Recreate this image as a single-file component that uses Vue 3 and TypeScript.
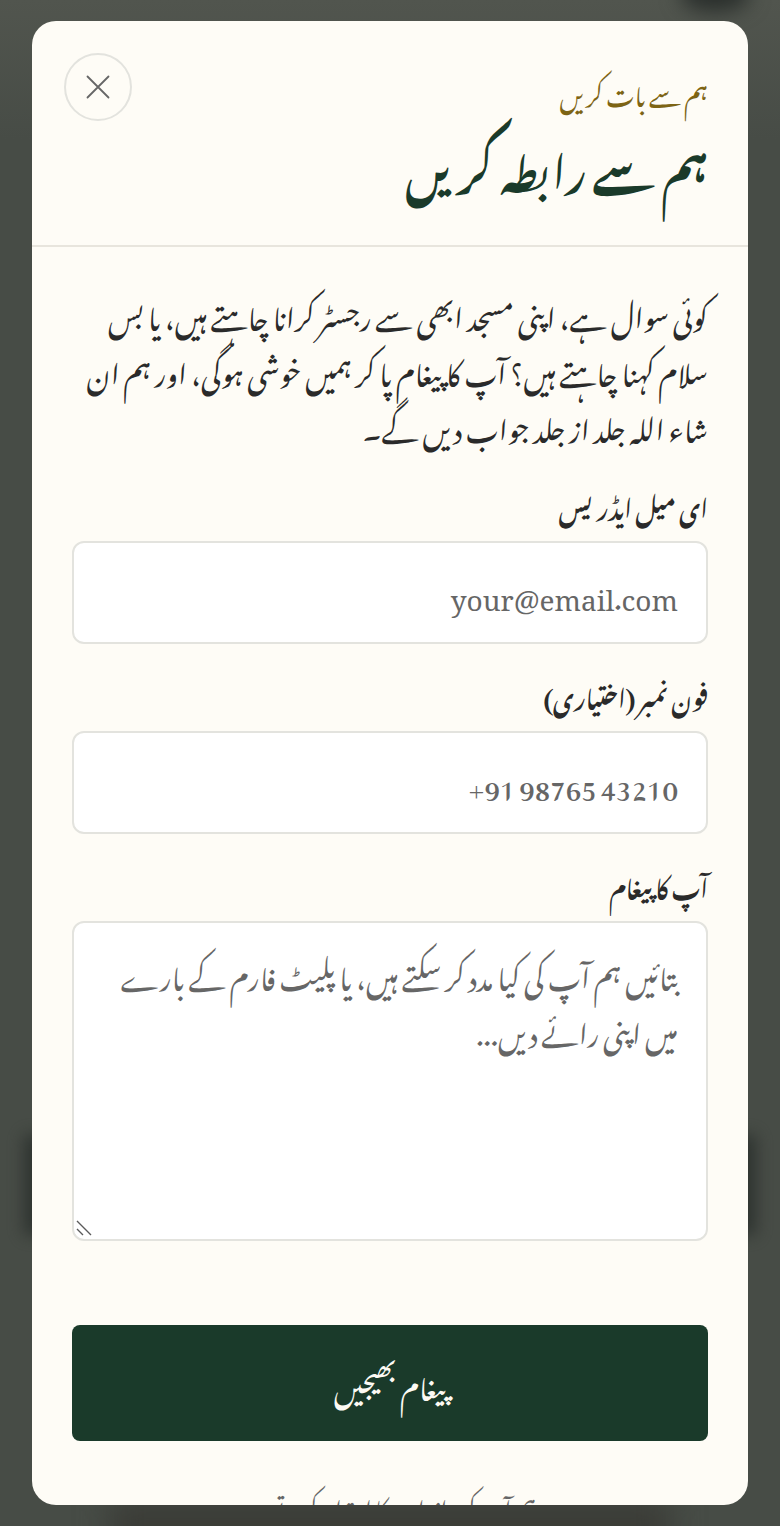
<script setup lang="ts">
const intro = 'کوئی سوال ہے، اپنی مسجد ابھی سے رجسٹر کرانا چاہتے ہیں، یا بس سلام کہنا چاہتے ہیں؟ آپ کا پیغام پا کر ہمیں خوشی ہوگی، اور ہم ان شاء اللہ جلد از جلد جواب دیں گے۔'
</script>

<template>
  <div class="page">
    <div class="blob blob-top"></div>
    <div class="blob blob-band"></div>
    <div class="blob blob-bottom"></div>
    <section class="modal" dir="rtl">
      <header class="head">
        <div class="titles">
          <p class="eyebrow">ہم سے بات کریں</p>
          <h1 class="title">ہم سے رابطہ کریں</h1>
        </div>
        <button class="close" aria-label="close">
          <svg width="24" height="24" viewBox="0 0 24 24" fill="none" stroke="#666" stroke-width="1.8" stroke-linecap="round"><path d="M1.5 1.5L22.5 22.5M22.5 1.5L1.5 22.5"/></svg>
        </button>
      </header>
      <div class="body">
        <p class="intro">{{ intro }}</p>
        <label class="label">ای میل ایڈریس</label>
        <input class="field ltr" placeholder="your@email.com" />
        <label class="label">فون نمبر (اختیاری)</label>
        <input class="field ltr" placeholder="+91 98765 43210" />
        <label class="label">آپ کا پیغام</label>
        <div class="area-wrap">
          <textarea class="field area" placeholder="بتائیں ہم آپ کی کیا مدد کر سکتے ہیں، یا پلیٹ فارم کے بارے میں اپنی رائے دیں..."></textarea>
          <svg class="grip" width="16" height="16" viewBox="0 0 16 16" fill="none" stroke="#5a5a5a" stroke-width="1.4"><path d="M1 1L15 15M1 9L7 15"/></svg>
        </div>
        <button class="send">پیغام بھیجیں</button>
        <p class="foot">ہم آپ کی رازداری کا احترام کرتے ہیں</p>
      </div>
    </section>
  </div>
</template>

<style>
html, body { margin: 0; background: #474c46; }
</style>
<style scoped>
.page { position: relative; height: 1526px; padding: 21px 32px; box-sizing: border-box; overflow: hidden; background: linear-gradient(#51554e, #474c46 140px); font-family: "Noto Nastaliq Urdu", "Noto Sans", serif; }
.blob { position: absolute; background: #2a2f2c; }
.blob-top { top: -24px; right: 30px; width: 70px; height: 36px; border-radius: 50%; filter: blur(10px); }
.blob-band { top: 1135px; left: 24px; right: 24px; height: 100px; filter: blur(8px); opacity: 0.85; }
.blob-bottom { top: 1500px; left: 110px; right: 110px; height: 50px; background: #3a3b36; filter: blur(16px); }
.modal { position: relative; height: 1484px; background: #fefcf6; border-radius: 24px; overflow: hidden; }
.head { display: flex; justify-content: space-between; padding: 32px 40px 0 32px; border-bottom: 2px solid #e8e5dd; height: 226px; box-sizing: border-box; }
.eyebrow { margin: 0; padding-top: 8px; font-size: 24px; color: #7d6414; }
.title { margin: -8px 0 0; font-size: 42px; font-weight: 700; color: #1a3a2a; }
.close { width: 68px; height: 68px; border-radius: 50%; border: 2px solid #e3e3de; background: transparent; display: flex; align-items: center; justify-content: center; padding: 0; }
.body { padding: 38px 40px 40px; }
.intro { margin: 0 0 22px; font-size: 28px; line-height: 56px; color: #2a2a2a; }
.label { display: block; font-size: 23.4px; font-weight: 700; color: #2a2a2a; margin-bottom: 7px; }
.field { display: block; width: 100%; box-sizing: border-box; height: 103px; border: 2px solid #e3e3de; border-radius: 12px; background: #fff; font-family: inherit; font-size: 28px; padding: 24px 28px; margin-bottom: 21px; }
.field::placeholder { color: #666; }
.ltr { direction: ltr; text-align: right; }
.area-wrap { position: relative; margin-bottom: 84px; }
.area { height: 320px; font-size: 28px; line-height: 56px; margin-bottom: 0; padding-top: 22px; resize: none; }
.grip { position: absolute; left: 4px; bottom: 5px; }
.send { display: block; width: 100%; height: 116px; background: #1a3a2a; color: #fdfaf4; border: 0; border-radius: 8px; font-family: inherit; font-size: 28px; }
.foot { text-align: center; margin: 36px 0 0; font-size: 22px; color: #666; }
</style>
